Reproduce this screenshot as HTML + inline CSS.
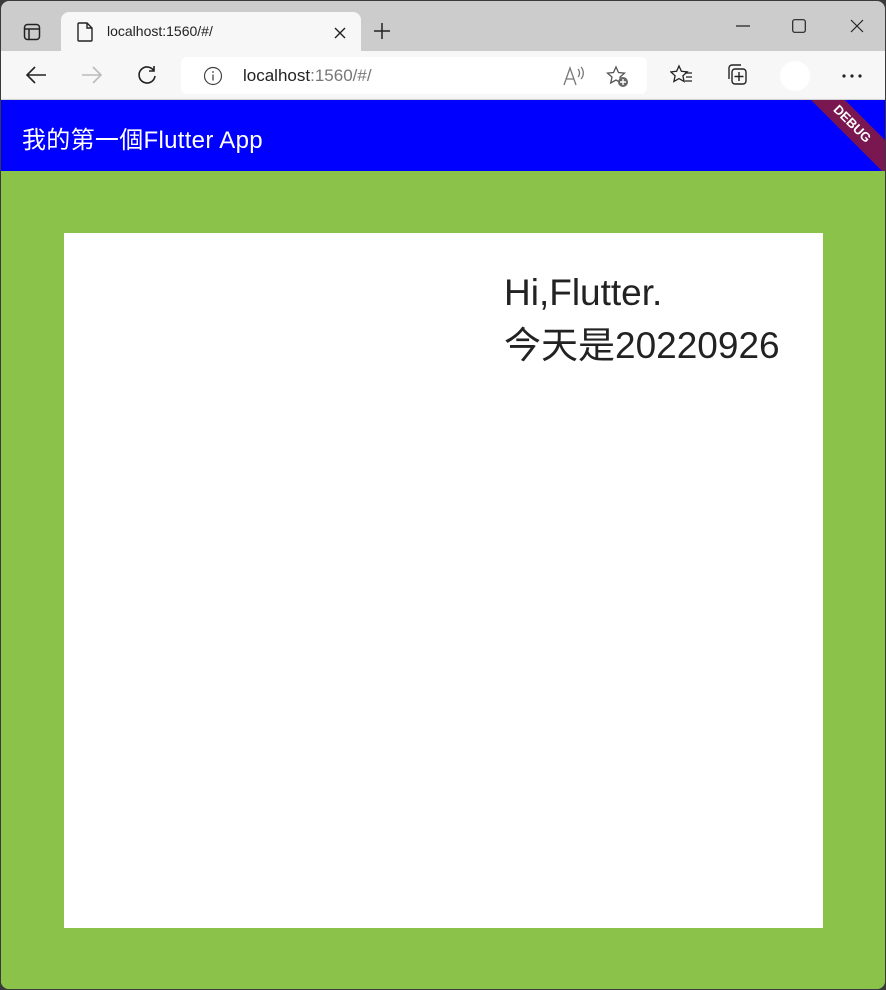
<!DOCTYPE html>
<html><head><meta charset="utf-8">
<style>
*{margin:0;padding:0;box-sizing:border-box}
html,body{width:886px;height:990px;overflow:hidden;background:#3a3a3a}
body{font-family:"Liberation Sans","Noto Sans CJK TC",sans-serif;position:relative}
#win{position:absolute;left:1px;top:1px;width:884px;height:988px;background:#cccccc;border-radius:8px;overflow:hidden}
#tab{position:absolute;left:60px;top:11px;width:300px;height:40px;background:#f7f7f7;border-radius:8px 8px 0 0}
#tab .t{position:absolute;left:46px;top:11px;font-size:14px;color:#222}
#bar{position:absolute;left:0;top:50px;width:884px;height:49px;background:#f7f7f7;border-bottom:1px solid #d8d8d8}
#url{position:absolute;left:180px;top:6px;width:466px;height:37px;background:#fff;border-radius:6px}
#url .u{position:absolute;left:62px;top:9px;font-size:17px;color:#222}
#url .u span{color:#777}
#app{position:absolute;left:0;top:99px;width:884px;height:71px;background:#0000ff;overflow:hidden;box-shadow:0 2px 4px rgba(0,0,0,.3)}
#app .title{position:absolute;left:21px;top:20px;font-size:24px;color:#fff;letter-spacing:0.3px}
#ribbon{position:absolute;right:-42px;top:12px;width:150px;height:24px;background:#7a1650;transform:rotate(45deg);color:#fff;font-size:13px;font-weight:bold;text-align:center;line-height:24px}
#body{position:absolute;left:0;top:170px;width:884px;height:818px;background:#8bc34a}
#box{position:absolute;left:63px;top:62px;width:759px;height:695px;background:#fff}
#txt{position:absolute;left:440px;top:33px;font-size:37px;color:#222;line-height:53px}
svg{position:absolute}
</style></head><body>
<div id="win">
<svg style="left:22px;top:22px" width="18" height="18" viewBox="0 0 18 18"><rect x="1.5" y="1.5" width="15" height="15" rx="3" fill="none" stroke="#222" stroke-width="1.5"/><line x1="1.5" y1="6" x2="16.5" y2="6" stroke="#222" stroke-width="1.5"/><line x1="6" y1="6" x2="6" y2="16.5" stroke="#222" stroke-width="1.5"/></svg>
<div id="tab">
<svg style="left:16px;top:10px" width="16" height="20" viewBox="0 0 16 20"><path d="M2 1h8l5 5v12a1 1 0 0 1-1 1H2a1 1 0 0 1-1-1V2a1 1 0 0 1 1-1zM10 1v5h5" fill="none" stroke="#222" stroke-width="1.4"/></svg>
<div class="t">localhost:1560/#/</div>
<svg style="left:273px;top:15px" width="12" height="12" viewBox="0 0 12 12"><path d="M1 1l10 10M11 1L1 11" stroke="#222" stroke-width="1.4"/></svg>
</div>
<svg style="left:372px;top:21px" width="18" height="18" viewBox="0 0 18 18"><path d="M9 1v16M1 9h16" stroke="#222" stroke-width="1.5"/></svg>
<svg style="left:735px;top:24px" width="14" height="4"><line x1="0" y1="1" x2="14" y2="1" stroke="#222" stroke-width="1.2"/></svg>
<svg style="left:791px;top:18px" width="14" height="14"><rect x="0.7" y="0.7" width="12.6" height="12.6" rx="2" fill="none" stroke="#222" stroke-width="1.2"/></svg>
<svg style="left:849px;top:18px" width="14" height="14"><path d="M1 1l12 12M13 1L1 13" stroke="#222" stroke-width="1.2"/></svg>
<div id="bar">
<svg style="left:24px;top:14px" width="22" height="20" viewBox="0 0 22 20"><path d="M21 10H2M10 2L2 10l8 8" fill="none" stroke="#222" stroke-width="1.6"/></svg>
<svg style="left:80px;top:14px" width="22" height="20" viewBox="0 0 22 20"><path d="M1 10h19M12 2l8 8-8 8" fill="none" stroke="#bbb" stroke-width="1.6"/></svg>
<svg style="left:135px;top:13px" width="22" height="22" viewBox="0 0 22 22"><path d="M18 7A8 8 0 1 0 19 12M18 2v5h-5" fill="none" stroke="#222" stroke-width="1.6"/></svg>
<div id="url">
<svg style="left:22px;top:9px" width="20" height="20" viewBox="0 0 20 20"><circle cx="10" cy="10" r="8.5" fill="none" stroke="#444" stroke-width="1.2"/><line x1="10" y1="8.5" x2="10" y2="14.5" stroke="#444" stroke-width="1.3"/><circle cx="10" cy="6" r="0.9" fill="#444"/></svg>
<div class="u">localhost<span>:1560/#/</span></div>
<svg style="left:382px;top:9px" width="22" height="20" viewBox="0 0 22 20"><path d="M1 19L7 2l6 17M3.5 13h7M15 3a6 6 0 0 1 0 8M18 1a9 9 0 0 1 0 12" fill="none" stroke="#777" stroke-width="1.3"/></svg>
<svg style="left:425px;top:8px" width="24" height="24" viewBox="0 0 24 24"><path d="M10 2l2.5 5.5 6 .6-4.5 4 1.3 5.9L10 15l-5.3 3 1.3-5.9-4.5-4 6-.6z" fill="none" stroke="#555" stroke-width="1.3"/><circle cx="17" cy="17" r="5" fill="#666"/><path d="M17 14v6M14 17h6" stroke="#fff" stroke-width="1.4"/></svg>
</div>
<svg style="left:669px;top:13px" width="24" height="22" viewBox="0 0 24 22"><path d="M9 2l2.4 5.3 5.8.6-4.3 3.9 1.2 5.7L9 14.6l-5.1 2.9 1.2-5.7L.8 7.9l5.8-.6z" fill="none" stroke="#222" stroke-width="1.3"/><path d="M15 9h7M16 13h6M15 17h7" stroke="#222" stroke-width="1.3"/></svg>
<svg style="left:724px;top:12px" width="24" height="24" viewBox="0 0 24 24"><path d="M4 16V5a3 3 0 0 1 3-3h9" fill="none" stroke="#222" stroke-width="1.4"/><rect x="7" y="6" width="14" height="15" rx="3" fill="none" stroke="#222" stroke-width="1.4"/><path d="M14 9v9M9.5 13.5h9" stroke="#222" stroke-width="1.4"/></svg>
<div style="position:absolute;left:779px;top:10px;width:30px;height:30px;border-radius:50%;background:#fff"></div>
<svg style="left:841px;top:23px" width="20" height="4"><circle cx="2" cy="2" r="1.6" fill="#222"/><circle cx="10" cy="2" r="1.6" fill="#222"/><circle cx="18" cy="2" r="1.6" fill="#222"/></svg>
</div>
<div id="app"><div class="title">我的第一個Flutter App</div><div id="ribbon">DEBUG</div></div>
<div id="body"><div id="box"><div id="txt">Hi,Flutter.<br>今天是20220926</div></div></div>
</div>
</body></html>
